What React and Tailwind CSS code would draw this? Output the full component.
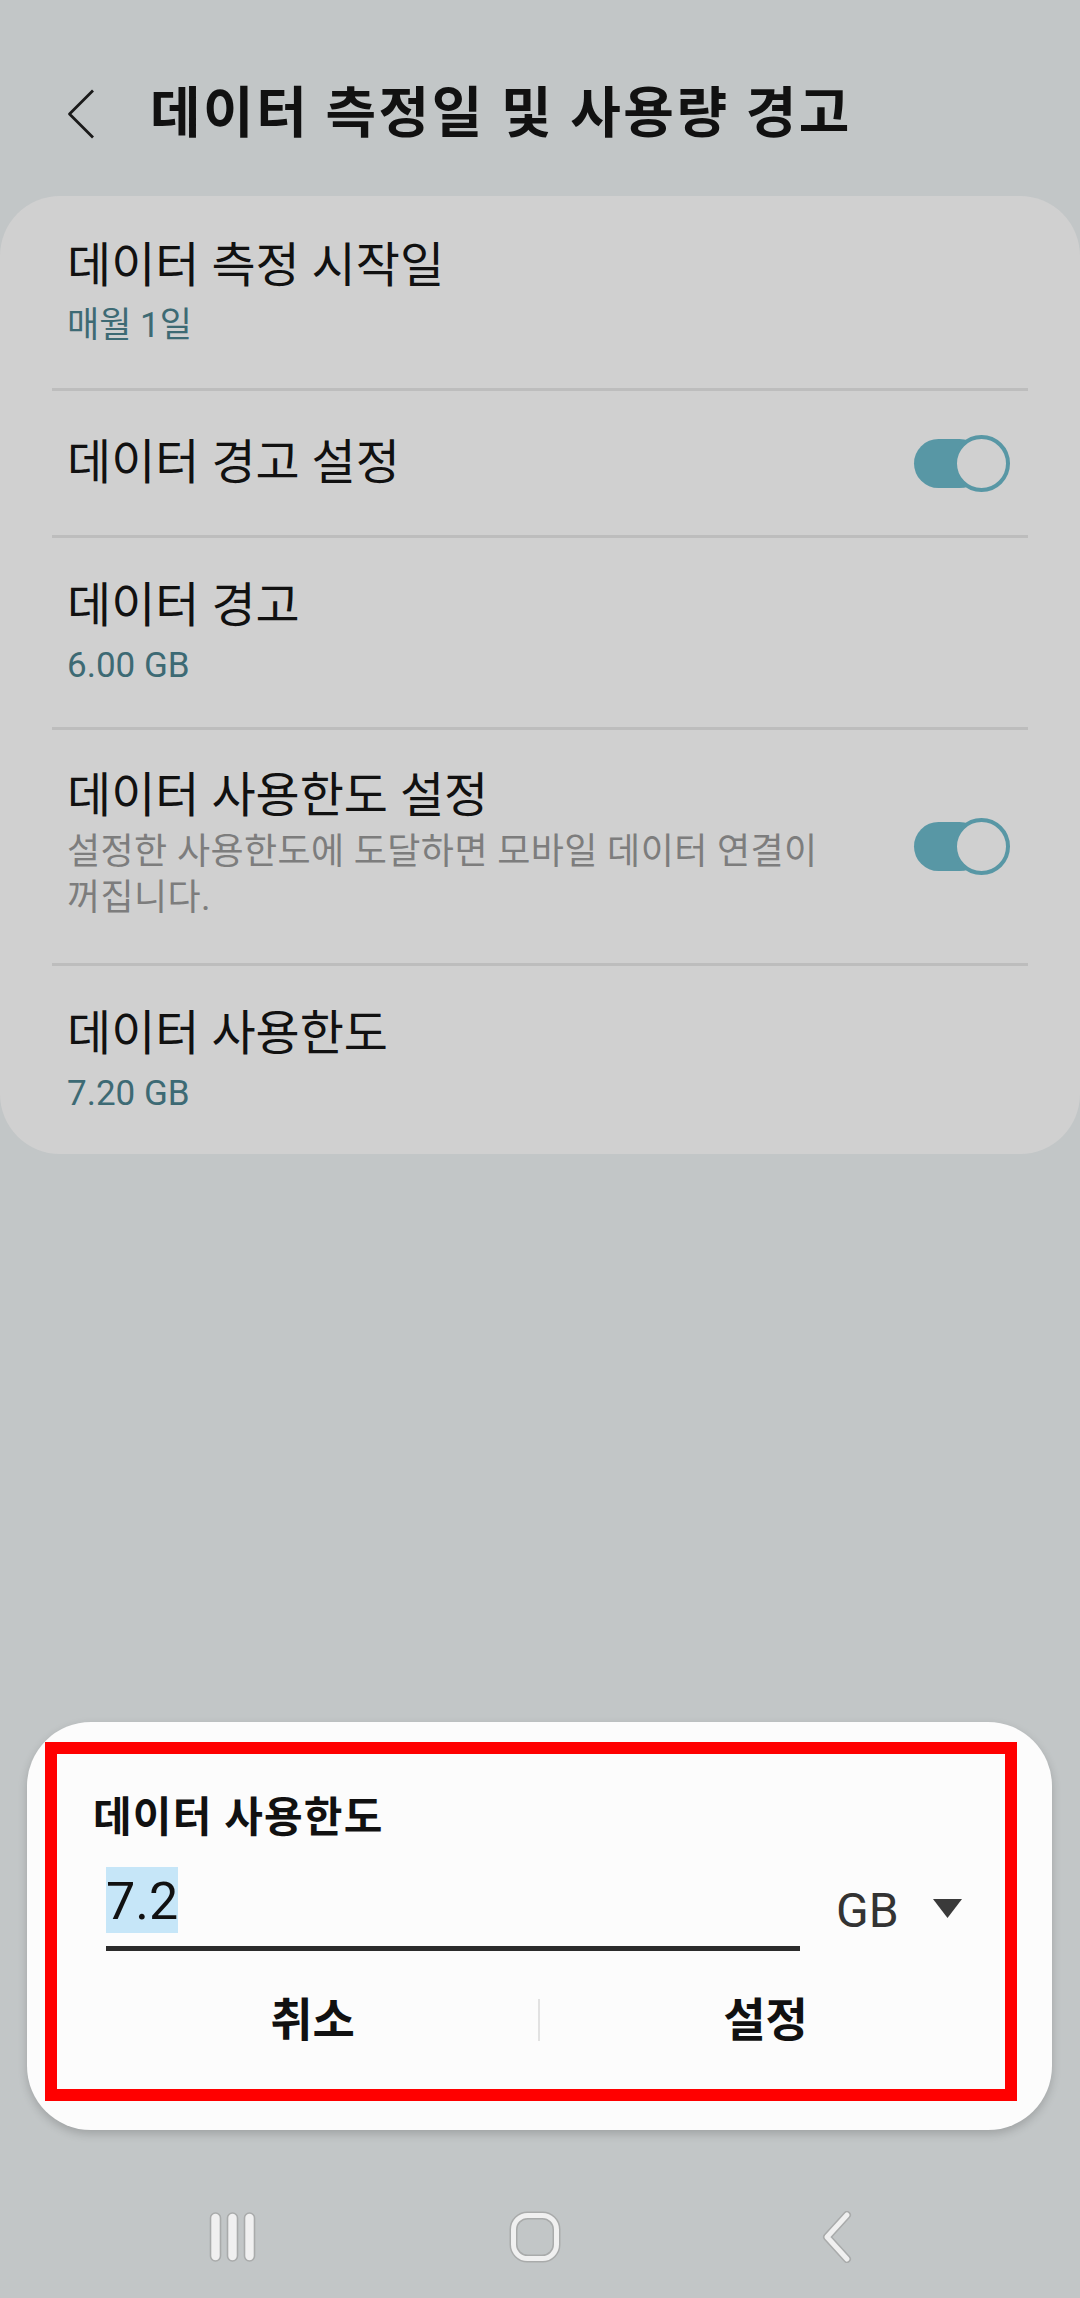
import React from "react";

// toggle switch in the "on" state
const Toggle = () => (
    <div className="relative w-[96px] h-[57px] shrink-0">
        <div className="absolute left-0 top-[4px] w-[70px] h-[49px] rounded-full bg-[#5897a5]" />
        <div className="absolute right-0 top-0 w-[57px] h-[57px] rounded-full border-[4px] border-[#5897a5] bg-[#d0d0d0]" />
    </div>
);

const Row = ({ title, sub, desc, toggle, height }) => (
    <div className={`flex items-center pl-[15px] pr-[18px] ${height}`}>
        <div className="flex-1 flex flex-col">
            <div className="text-[48px] leading-none text-[#111111]">{title}</div>
            {sub && <div className="mt-[18px] text-[35px] leading-none text-[#3d6a74]">{sub}</div>}
            {desc && (
                <div className="mt-[9px] pr-[20px] text-[36px] leading-[46px] tracking-[0.4px] break-keep text-[#7d7d7d]">{desc}</div>
            )}
        </div>
        {toggle && <Toggle />}
    </div>
);

const Divider = () => <div className="h-[3px] bg-[#bdbdbd]" />;

const App = () => {
    return (
        <div className="flex flex-col h-[2298px] w-[1080px] bg-[#c2c6c7] font-[family-name:Roboto,'Noto_Sans_CJK_KR',sans-serif]">
            {/* header */}
            <div className="h-[196px] flex items-start pt-[86px] pl-[67px]">
                <div className="h-[55px] flex items-center">
                    <svg width="28" height="50" viewBox="0 0 28 50">
                        <polyline points="26,1.5 2.5,25 26,48.5" fill="none" stroke="#1a1a1a" strokeWidth="2.8" strokeLinejoin="round" />
                    </svg>
                </div>
                <h1 className="ml-[55px] text-[55px] leading-none tracking-[2.5px] font-bold text-[#111111]">데이터 측정일 및 사용량 경고</h1>
            </div>

            {/* settings card */}
            <div className="h-[958px] bg-[#d0d0d0] rounded-[60px] px-[52px] flex flex-col">
                <Row title="데이터 측정 시작일" sub="매월 1일" height="h-[192px]" />
                <Divider />
                <Row title="데이터 경고 설정" toggle height="h-[144px]" />
                <Divider />
                <Row title="데이터 경고" sub="6.00 GB" height="h-[189px]" />
                <Divider />
                <Row
                    title="데이터 사용한도 설정"
                    desc="설정한 사용한도에 도달하면 모바일 데이터 연결이 꺼집니다."
                    toggle
                    height="h-[233px]"
                />
                <Divider />
                <Row title="데이터 사용한도" sub="7.20 GB" height="h-[188px]" />
            </div>

            {/* limit dialog */}
            <div className="mt-auto ml-[27px] w-[1025px] h-[408px] rounded-[64px] bg-[#fcfcfc] shadow-[0_4px_10px_rgba(0,0,0,0.18)] pt-[20px] pl-[18px] pr-[35px] pb-[29px]">
                <div className="h-full border-[12px] border-[#ff0000] flex flex-col">
                    <div className="pt-[43px] pl-[36px] text-[42px] leading-none tracking-[1.2px] font-bold text-[#111111]">데이터 사용한도</div>
                    <div className="mt-[28px] flex items-start">
                        <div className="ml-[49px] w-[694px] flex flex-col">
                            <div>
                                <span className="inline-block h-[66px] leading-[66px] pt-[2px] bg-[#c6e6f8] text-[52px] text-[#111111]">7.2</span>
                            </div>
                            <div className="mt-[13px] h-[5px] bg-[#2b2b2b]" />
                        </div>
                        <div className="ml-[36px] mt-[20px] flex items-center">
                            <span className="text-[48px] leading-none text-[#333333]">GB</span>
                            <svg className="ml-[34px] mb-[6px]" width="29" height="19" viewBox="0 0 29 19">
                                <polygon points="0,0 29,0 14.5,19" fill="#3a3a3a" />
                            </svg>
                        </div>
                    </div>
                    <div className="flex-1 flex items-center pl-[30px] pr-[14px]">
                        <button className="flex-1 text-[46px] leading-none font-bold text-[#111111]">취소</button>
                        <div className="w-[2px] h-[42px] bg-[#e2e2e2]" />
                        <button className="flex-1 text-[46px] leading-none font-bold text-[#111111]">설정</button>
                    </div>
                </div>
            </div>

            {/* navigation bar */}
            <div className="h-[168px] pt-[45px] pr-[10px] flex items-center justify-center gap-[182px]">
                <div className="w-[120px] flex justify-center">
                    <svg width="48" height="50" viewBox="0 0 48 50">
                        <rect x="1.5" y="1" width="10" height="48" rx="5" fill="#f0f0f0" stroke="#a9abab" strokeWidth="1.6" />
                        <rect x="18.5" y="1" width="10" height="48" rx="5" fill="#f0f0f0" stroke="#a9abab" strokeWidth="1.6" />
                        <rect x="35.5" y="1" width="10" height="48" rx="5" fill="#f0f0f0" stroke="#a9abab" strokeWidth="1.6" />
                    </svg>
                </div>
                <div className="w-[120px] flex justify-center">
                    <svg width="52" height="52" viewBox="0 0 52 52">
                        <rect x="4.5" y="4.5" width="43" height="43" rx="14" fill="none" stroke="#a9abab" strokeWidth="8" />
                        <rect x="4.5" y="4.5" width="43" height="43" rx="14" fill="none" stroke="#f0f0f0" strokeWidth="5" />
                    </svg>
                </div>
                <div className="w-[120px] flex justify-center">
                    <svg width="32" height="52" viewBox="0 0 32 52">
                        <polyline points="26,4 6,26 26,48" fill="none" stroke="#a9abab" strokeWidth="8" strokeLinecap="round" strokeLinejoin="round" />
                        <polyline points="26,4 6,26 26,48" fill="none" stroke="#f0f0f0" strokeWidth="5" strokeLinecap="round" strokeLinejoin="round" />
                    </svg>
                </div>
            </div>
        </div>
    );
};

export default App;
